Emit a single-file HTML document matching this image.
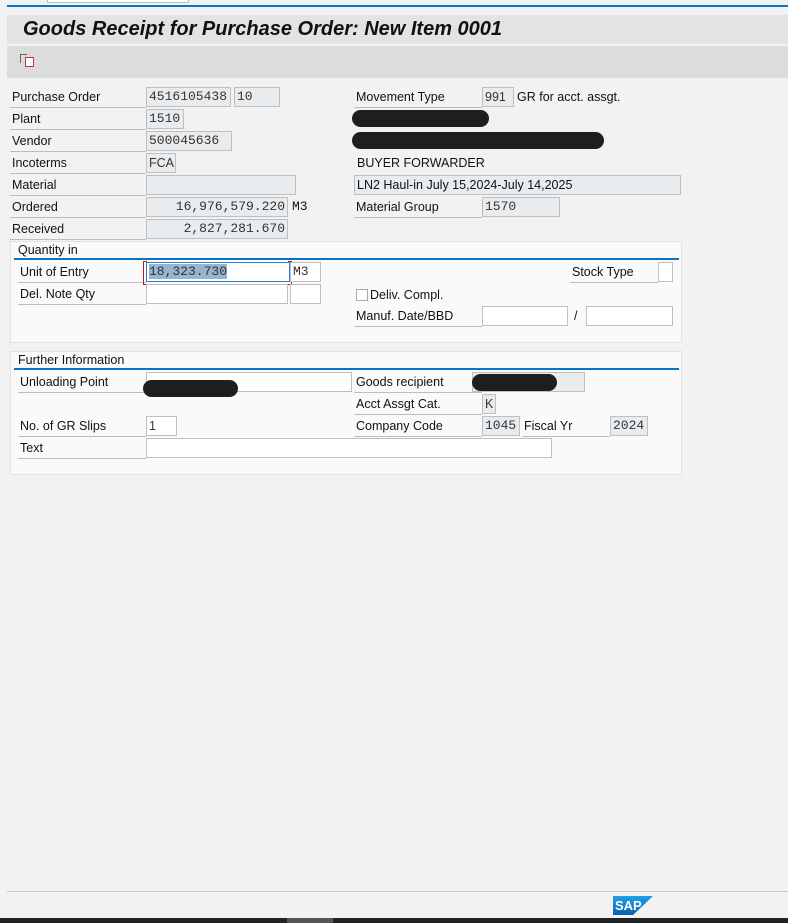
<!DOCTYPE html>
<html><head><style>
body{margin:0;width:788px;height:923px;background:#f2f2f2;position:relative;overflow:hidden;font-family:"Liberation Sans",Arial,sans-serif;font-size:12.5px;color:#111}
.a{position:absolute;box-sizing:border-box}
.l{position:absolute;box-sizing:border-box;border-bottom:1px solid #bdbdbd;height:21px;line-height:21px;padding-left:2px;white-space:nowrap}
.f{position:absolute;box-sizing:border-box;height:20px;border:1px solid #bfbfbf;background:#e9ecef;font-family:"Liberation Mono",monospace;font-size:13px;line-height:18px;padding:0 2px;color:#333;white-space:nowrap}
.w{background:#fff}
.r{text-align:right}
.t{position:absolute;white-space:nowrap;line-height:20px}
.p{position:absolute;background:#1e1e1e;border-radius:9px}
.pan{position:absolute;background:#fafafa;border:1px solid #e2e2e2;box-sizing:border-box}
.bl{position:absolute;height:2px;background:#0a74c4}
</style></head><body>
<div class="a" style="left:47px;top:0;width:142px;height:3px;border:1px solid #bbb;border-top:none;background:#fff"></div>
<div class="a" style="left:7px;top:5px;width:781px;height:2px;background:#0a74c4"></div>
<div class="a" style="left:7px;top:15px;width:781px;height:29px;background:#e3e3e3"></div>
<div class="t" style="left:23px;top:16px;font-size:20px;font-weight:bold;font-style:italic;line-height:26px">Goods Receipt for Purchase Order: New Item 0001</div>
<div class="a" style="left:7px;top:46px;width:781px;height:32px;background:#dcdcdc"></div>
<div class="a" style="left:20px;top:54px;width:7px;height:9px;border:1px solid #666;border-right:none;border-bottom:none"></div>
<div class="a" style="left:25px;top:57px;width:9px;height:10px;border:1px solid #c0392b;background:#fff"></div>

<div class="l" style="left:10px;top:87px;width:136px">Purchase Order</div>
<div class="f" style="left:146px;top:87px;width:85px">4516105438</div>
<div class="f" style="left:234px;top:87px;width:46px">10</div>
<div class="l" style="left:10px;top:109px;width:136px">Plant</div>
<div class="f" style="left:146px;top:109px;width:38px">1510</div>
<div class="l" style="left:10px;top:131px;width:136px">Vendor</div>
<div class="f" style="left:146px;top:131px;width:86px">500045636</div>
<div class="l" style="left:10px;top:153px;width:136px">Incoterms</div>
<div class="f" style="left:146px;top:153px;width:30px;font-family:'Liberation Sans',sans-serif;font-size:12.5px">FCA</div>
<div class="l" style="left:10px;top:175px;width:136px">Material</div>
<div class="f" style="left:146px;top:175px;width:150px"></div>
<div class="l" style="left:10px;top:197px;width:136px">Ordered</div>
<div class="f r" style="left:146px;top:197px;width:142px">16,976,579.220</div>
<div class="t" style="left:292px;top:197px;font-family:'Liberation Mono',monospace;font-size:13px">M3</div>
<div class="l" style="left:10px;top:219px;width:136px">Received</div>
<div class="f r" style="left:146px;top:219px;width:142px">2,827,281.670</div>

<div class="l" style="left:354px;top:87px;width:128px">Movement Type</div>
<div class="f" style="left:482px;top:87px;width:32px;font-family:'Liberation Sans',sans-serif;font-size:12.5px">991</div>
<div class="t" style="left:517px;top:87px">GR for acct. assgt.</div>
<div class="p" style="left:352px;top:110px;width:137px;height:17px"></div>
<div class="p" style="left:352px;top:132px;width:252px;height:17px"></div>
<div class="t" style="left:357px;top:153px">BUYER FORWARDER</div>
<div class="f" style="left:354px;top:175px;width:327px;font-family:'Liberation Sans',sans-serif;font-size:12.5px;color:#111">LN2 Haul-in July 15,2024-July 14,2025</div>
<div class="l" style="left:354px;top:197px;width:128px">Material Group</div>
<div class="f" style="left:482px;top:197px;width:78px">1570</div>

<div class="pan" style="left:10px;top:241px;width:672px;height:102px"></div>
<div class="t" style="left:18px;top:240px">Quantity in</div>
<div class="bl" style="left:14px;top:258px;width:665px"></div>
<div class="l" style="left:18px;top:262px;width:128px">Unit of Entry</div>
<div class="f w" style="left:146px;top:262px;width:144px;border-color:#2a7fc4;padding-left:2px"><span style="background:#99b4d1">18,323.730</span></div>
<div class="a" style="left:143px;top:261px;width:4px;height:24px;border:1px solid #b01e1e;border-right:none"></div>
<div class="a" style="left:288px;top:261px;width:4px;height:24px;border:1px solid #b01e1e;border-left:none"></div>
<div class="f w" style="left:290px;top:262px;width:31px">M3</div>
<div class="l" style="left:570px;top:262px;width:88px">Stock Type</div>
<div class="f w" style="left:658px;top:262px;width:15px"></div>
<div class="l" style="left:18px;top:284px;width:128px">Del. Note Qty</div>
<div class="f w" style="left:146px;top:284px;width:142px"></div>
<div class="f w" style="left:290px;top:284px;width:31px"></div>
<div class="a" style="left:356px;top:289px;width:12px;height:12px;border:1px solid #aaa;background:#fff"></div>
<div class="t" style="left:370px;top:285px">Deliv. Compl.</div>
<div class="l" style="left:354px;top:306px;width:128px">Manuf. Date/BBD</div>
<div class="f w" style="left:482px;top:306px;width:86px"></div>
<div class="t" style="left:574px;top:306px">/</div>
<div class="f w" style="left:586px;top:306px;width:87px"></div>

<div class="pan" style="left:10px;top:351px;width:672px;height:124px"></div>
<div class="t" style="left:18px;top:350px">Further Information</div>
<div class="bl" style="left:14px;top:368px;width:665px"></div>
<div class="l" style="left:18px;top:372px;width:128px">Unloading Point</div>
<div class="f w" style="left:146px;top:372px;width:206px"></div>
<div class="p" style="left:143px;top:380px;width:95px;height:17px"></div>
<div class="l" style="left:354px;top:372px;width:128px">Goods recipient</div>
<div class="f" style="left:472px;top:372px;width:113px"></div>
<div class="p" style="left:472px;top:374px;width:85px;height:17px"></div>
<div class="l" style="left:354px;top:394px;width:128px">Acct Assgt Cat.</div>
<div class="f" style="left:482px;top:394px;width:14px;font-family:'Liberation Sans',sans-serif;font-size:12.5px">K</div>
<div class="l" style="left:18px;top:416px;width:128px">No. of GR Slips</div>
<div class="f w" style="left:146px;top:416px;width:31px;font-family:'Liberation Sans',sans-serif;font-size:12.5px">1</div>
<div class="l" style="left:354px;top:416px;width:128px">Company Code</div>
<div class="f" style="left:482px;top:416px;width:38px">1045</div>
<div class="l" style="left:522px;top:416px;width:88px">Fiscal Yr</div>
<div class="f" style="left:610px;top:416px;width:38px">2024</div>
<div class="l" style="left:18px;top:438px;width:128px">Text</div>
<div class="f w" style="left:146px;top:438px;width:406px"></div>

<div class="a" style="left:7px;top:891px;width:781px;height:1px;background:#c8c8c8"></div>
<svg class="a" style="left:613px;top:896px" width="40" height="19" viewBox="0 0 40 19"><defs><linearGradient id="g" x1="0" y1="0" x2="0" y2="1"><stop offset="0" stop-color="#1fa0e6"/><stop offset="1" stop-color="#0a5fb0"/></linearGradient></defs><polygon points="0,0 40,0 20,19 0,19" fill="url(#g)"/><text x="2" y="14" font-family="Liberation Sans" font-weight="bold" font-size="13" fill="#fff">SAP</text></svg>
<div class="a" style="left:0;top:918px;width:788px;height:5px;background:#222"></div>
<div class="a" style="left:287px;top:918px;width:46px;height:5px;background:#555"></div>
</body></html>
